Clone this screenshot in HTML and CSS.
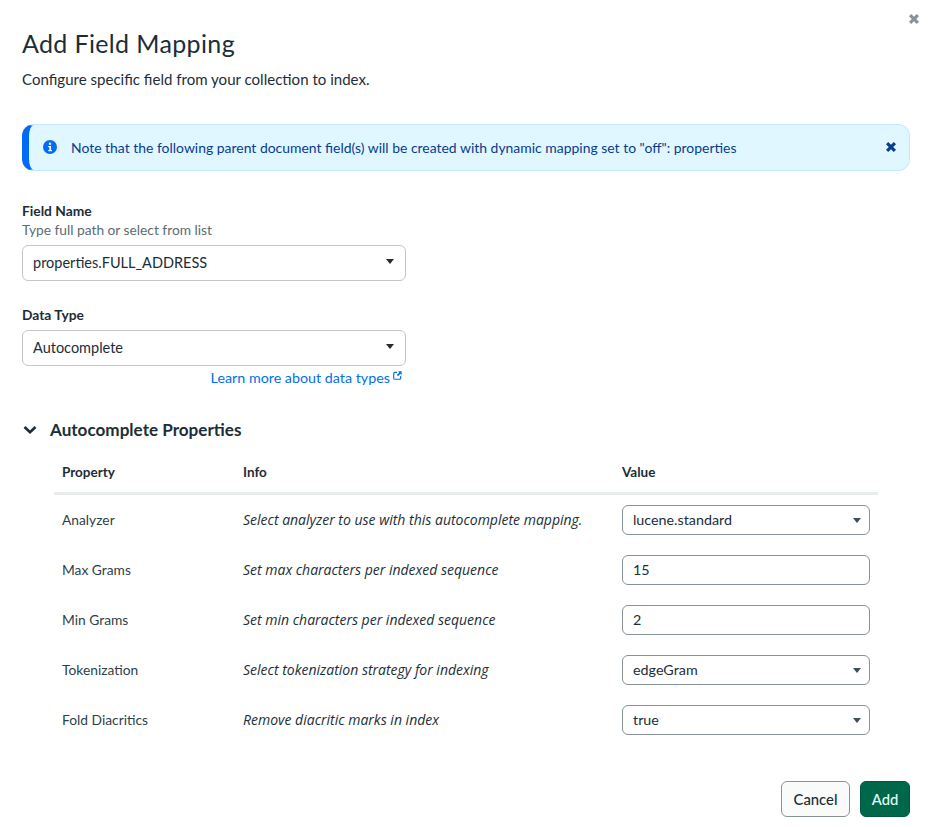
FILE: index.html
```html
<!DOCTYPE html>
<html lang="en">
<head>
<meta charset="utf-8">
<title>Add Field Mapping</title>
<link rel="stylesheet" href="styles.css">
</head>
<body>
<div class="modal">
  <svg class="modal-close" viewBox="0 0 16 16"><path d="M3 5.200 5.200 3 8 5.800 10.800 3 13 5.200 10.200 8 13 10.800 10.800 13 8 10.200 5.200 13 3 10.800 5.800 8Z"/></svg>
  <h1 class="title">Add Field Mapping</h1>
  <p class="subtitle">Configure specific field from your collection to index.</p>
  <div class="alert">
    <svg class="alert-icon" viewBox="0 0 14 14"><circle cx="7" cy="7" r="7" fill="#016bf8"/><circle cx="7" cy="3.800" r="1.250" fill="#e1f7ff"/><path d="M5.200 6h2.900v4.100h.9v1.200H5.200v-1.200h1.100V7.200H5.200Z" fill="#e1f7ff"/></svg>
    <span class="alert-text">Note that the following parent document field(s) will be created with dynamic mapping set to "off": properties</span>
    <svg class="alert-close" viewBox="0 0 16 16"><path d="M3 5.200 5.200 3 8 5.800 10.800 3 13 5.200 10.200 8 13 10.800 10.800 13 8 10.200 5.200 13 3 10.800 5.800 8Z"/></svg>
  </div>
  <div class="field field-name">
    <div class="label">Field Name</div>
    <div class="hint">Type full path or select from list</div>
    <div class="control control-lg"><span>properties.FULL_ADDRESS</span><i class="caret"></i></div>
  </div>
  <div class="field field-type">
    <div class="label label-solo">Data Type</div>
    <div class="control control-lg"><span>Autocomplete</span><i class="caret"></i></div>
    <div class="learn"><a class="link">Learn more about data types</a><svg class="ext" viewBox="0 0 10 10"><path d="M4.500 1.500H2A1.200 1.200 0 0 0 .8 2.700V8A1.200 1.200 0 0 0 2 9.200h5.300A1.200 1.200 0 0 0 8.500 8V5.500" fill="none" stroke="#0070e8" stroke-width="1.300"/><path d="M5.600.4h4v4L8.200 3 5.500 5.700 4.300 4.500 7 1.800Z" fill="#0070e8"/></svg></div>
  </div>
  <div class="section-head">
    <svg class="chevron" viewBox="0 0 16 16"><path d="M2.500 5 8 10.200 13.500 5" fill="none" stroke="#1c2d38" stroke-width="2.600"/></svg>
    <h2 class="section-title">Autocomplete Properties</h2>
  </div>
  <div class="props">
    <div class="props-head">
      <div>Property</div><div>Info</div><div class="value-col">Value</div>
    </div>
    <div class="prop-row">
      <div>Analyzer</div><div class="info">Select analyzer to use with this autocomplete mapping.</div>
      <div class="value-col"><div class="control"><span>lucene.standard</span><i class="caret"></i></div></div>
    </div>
    <div class="prop-row">
      <div>Max Grams</div><div class="info">Set max characters per indexed sequence</div>
      <div class="value-col"><div class="control"><span>15</span></div></div>
    </div>
    <div class="prop-row">
      <div>Min Grams</div><div class="info">Set min characters per indexed sequence</div>
      <div class="value-col"><div class="control"><span>2</span></div></div>
    </div>
    <div class="prop-row">
      <div>Tokenization</div><div class="info">Select tokenization strategy for indexing</div>
      <div class="value-col"><div class="control"><span>edgeGram</span><i class="caret"></i></div></div>
    </div>
    <div class="prop-row">
      <div>Fold Diacritics</div><div class="info">Remove diacritic marks in index</div>
      <div class="value-col"><div class="control"><span>true</span><i class="caret"></i></div></div>
    </div>
  </div>
  <div class="footer">
    <button class="btn btn-cancel">Cancel</button>
    <button class="btn btn-add">Add</button>
  </div>
</div>
</body>
</html>
```
FILE: styles.css
```css
* { box-sizing: border-box; }
html, body { margin: 0; background: #fff; }
body { font-family: Lato, "Noto Sans", sans-serif; color: #1c2d38; font-size: 14px; }
.modal { position: relative; width: 933px; height: 827px; padding: 27px 23px 0 22px; overflow: hidden; }
.modal-close { position: absolute; left: 906px; top: 11px; width: 16px; height: 16px; fill: #889397; }
.title { margin: 0; font-size: 25px; line-height: 32px; font-weight: 400; color: #1c2d38; letter-spacing: .36px; }
.subtitle { margin: 10px 0 0; font-size: 15.050px; line-height: 20px; color: #1c2d38; }
.alert { margin-top: 35px; height: 47px; display: flex; align-items: center; background: #e1f7ff; border: 1px solid #c3e7fe; border-left: 7px solid #016bf8; border-radius: 12px; padding: 0 10px 0 14px; }
.alert-icon { width: 14px; height: 14px; margin-top: -1px; flex: none; }
.alert-text { margin-left: 14px; flex: 1; font-size: 13.950px; color: #083c90; }
.alert-close { width: 16px; height: 16px; margin-top: -1px; fill: #083c90; flex: none; }
.field { width: 384px; }
.field-name { margin-top: 32px; }
.field-type { margin-top: 26px; }
.label { font-size: 13.800px; line-height: 16px; font-weight: 700; color: #1c2d38; }
.hint { font-size: 13.750px; line-height: 18px; color: #5c6c75; margin-top: 2px; margin-bottom: 6px; }
.label-solo { margin-bottom: 7px; }
.control { position: relative; height: 30px; display: flex; align-items: center; padding: 0 10px 1px; border: 1px solid #889397; border-radius: 6px; font-size: 14.300px; color: #1c2d38; background: #fff; }
.control-lg { height: 36px; border-color: #c1c7c6; font-size: 14.500px; padding: 0 10px 1px; }
.caret { position: absolute; right: 8px; top: 12px; border-left: 4px solid transparent; border-right: 4px solid transparent; border-top: 5px solid #3d4f58; }
.control-lg .caret { top: 13px; right: 11px; border-top-color: #2b2b2b; }
.learn { display: flex; justify-content: flex-end; align-items: flex-start; margin-top: 4px; padding-right: 4px; line-height: 16px; }
.link { color: #0070e8; font-size: 14.300px; }
.ext { width: 9px; height: 9px; margin: 1px 0 0 3px; }
.section-head { display: flex; align-items: center; gap: 12px; margin-top: 32px; height: 24px; }
.chevron { width: 16px; height: 16px; }
.section-title { margin: 0; font-size: 17.100px; line-height: 24px; font-weight: 700; color: #1c2d38; }
.props { width: 824px; margin-left: 32px; margin-top: 17px; }
.props-head, .prop-row { display: grid; grid-template-columns: 181px 379px 1fr; padding-left: 8px; align-items: center; }
.props-head { height: 36px; border-bottom: 3px solid #e8edeb; font-weight: 700; font-size: 13.500px; padding-bottom: 7px; }
.prop-row { height: 50px; color: #2f3f48; font-size: 13.800px; }
.prop-row > div:not(.value-col) { padding-bottom: 2px; }
.info { font-family: "Open Sans", Lato, sans-serif; font-style: italic; font-size: 14px; color: #1c2d38; }
.value-col { padding-right: 8px; }
.footer { display: flex; justify-content: flex-end; gap: 10px; margin-top: 36px; }
.btn { height: 36px; border-radius: 6px; font-family: Lato, "Noto Sans", sans-serif; font-size: 14.800px; font-weight: 500; padding: 0; }
.btn-cancel { width: 69px; background: #f9fbfa; border: 1px solid #889397; color: #1c2d38; }
.btn-add { width: 50px; background: #00684a; border: 1px solid #00593f; color: #e3fcf7; }
```
